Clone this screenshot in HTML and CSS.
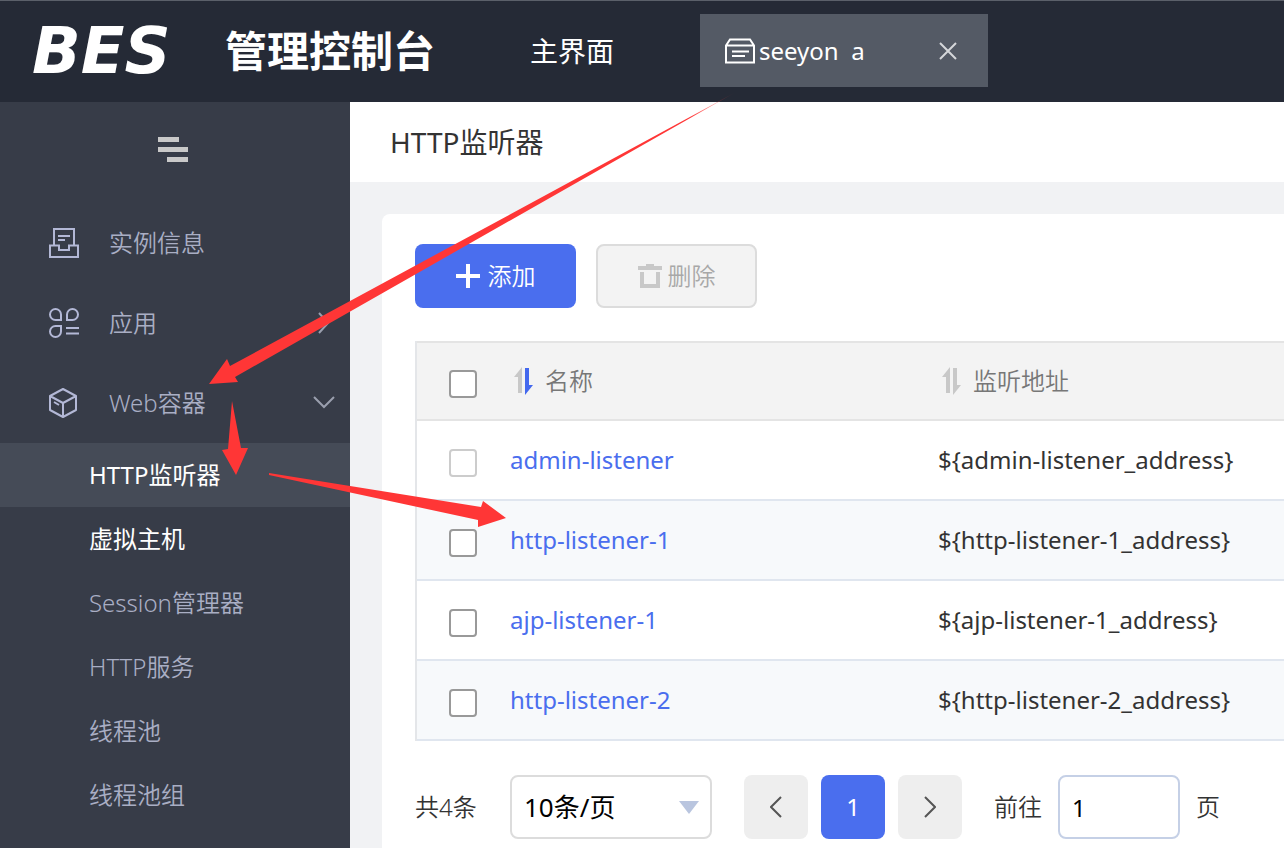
FILE: index.html
```html
<!DOCTYPE html>
<html lang="zh-CN">
<head>
  <meta charset="UTF-8">
  <meta name="viewport" content="width=device-width, initial-scale=1.0">
  <title>BES 管理控制台</title>
  <link rel="stylesheet" href="styles.css">
</head>
<body>
  <header class="topbar">
    <div class="brand">
      <span class="brand-logo">BES</span>
      <span class="brand-name">管理控制台</span>
    </div>
    <a class="home-link" href="#">主界面</a>
    <div class="tab">
      <svg class="tab-icon" width="30" height="26" viewBox="0 0 30 26" fill="none" stroke="#fff" stroke-width="2">
        <path d="M1 7.500 L5 1.500 H25 L29 7.500 V24.500 H1 Z M1 7.500 H29"/>
        <path d="M7 13.500 H24 M7 18 H20"/>
      </svg>
      <span class="tab-title">seeyon&nbsp; a</span>
      <button class="tab-close" type="button" aria-label="关闭">
        <svg width="18" height="18" viewBox="0 0 18 18" fill="none" stroke="#d5d7da" stroke-width="2">
          <path d="M1 1 L17 17 M17 1 L1 17"/>
        </svg>
      </button>
    </div>
  </header>

  <div class="layout">
    <nav class="sidebar">
      <button class="collapse" type="button" aria-label="收起菜单">
        <svg width="30" height="25" viewBox="0 0 30 25" fill="#c9c9c9">
          <path d="M0 0h21v5H0z M0 10h30v5H0z M9 20h21v5H9z"/>
        </svg>
      </button>
      <ul class="menu">
        <li>
          <a class="menu-item" href="#">
            <svg width="30" height="30" viewBox="0 0 30 30" fill="none" stroke="#b3b8d6" stroke-width="2">
              <path d="M5 17 V1 H25 V17"/>
              <path d="M1 17.500 H10 V22 H20 V17.500 H29 V29 H1 Z"/>
              <path d="M9 8 H21 M9 12 H16"/>
            </svg>
            <span>实例信息</span>
          </a>
        </li>
        <li>
          <a class="menu-item" href="#">
            <svg width="30" height="30" viewBox="0 0 30 30" fill="none" stroke="#b3b8d6" stroke-width="2">
              <path d="M12 12 H6.500 A5.500 5.500 0 1 1 12 6.500 Z"/>
              <path d="M18 12 V6.500 A5.500 5.500 0 1 1 23.500 12 Z"/>
              <path d="M12 18 V23.500 A5.500 5.500 0 1 1 6.500 18 Z"/>
              <path d="M17 20 H30 M17 25.500 H30"/>
            </svg>
            <span>应用</span>
            <svg class="arrow" width="22" height="22" viewBox="0 0 22 22" fill="none" stroke="#9a9fae" stroke-width="2">
              <path d="M6 1 L15 11 L6 21"/>
            </svg>
          </a>
        </li>
        <li>
          <a class="menu-item" href="#">
            <svg width="30" height="30" viewBox="0 0 30 30" fill="none" stroke="#b3b8d6" stroke-width="2" stroke-linejoin="round">
              <path d="M14 1 L27 8 V22 L14 29 L1 22 V8 Z M1 8 L14 15 L27 8 M14 15 V29"/>
              <path d="M5 14 L10 17"/>
            </svg>
            <span>Web容器</span>
            <svg class="arrow" width="22" height="22" viewBox="0 0 22 22" fill="none" stroke="#9a9fae" stroke-width="2">
              <path d="M1 5 L11 15 L21 5"/>
            </svg>
          </a>
          <ul class="submenu">
            <li><a class="active" href="#">HTTP监听器</a></li>
            <li><a class="bright" href="#">虚拟主机</a></li>
            <li><a href="#">Session管理器</a></li>
            <li><a href="#">HTTP服务</a></li>
            <li><a href="#">线程池</a></li>
            <li><a href="#">线程池组</a></li>
          </ul>
        </li>
      </ul>
    </nav>

    <main class="content">
      <h1 class="page-title">HTTP监听器</h1>
      <section class="card">
        <div class="toolbar">
          <button class="btn btn-primary" type="button">
            <svg width="24" height="24" viewBox="0 0 24 24" stroke="#fff" stroke-width="4">
              <path d="M12 0 V24 M0 12 H24"/>
            </svg>
            添加
          </button>
          <button class="btn btn-disabled" type="button" disabled>
            <svg width="24" height="26" viewBox="0 0 24 26" fill="#c8c8c8">
              <path d="M8 1h8v2h8v4H0V3h8z"/>
              <path d="M2 9h4v12h12V9h4v16H2z"/>
            </svg>
            删除
          </button>
        </div>

        <table class="list">
          <thead>
            <tr>
              <th class="check"><input type="checkbox" aria-label="全选"></th>
              <th class="name">
                <span class="sort">
                  <svg width="20" height="28" viewBox="0 0 20 28">
                    <path fill="#c8c8c8" d="M8 0 V26 H4 V10 H0 Z"/>
                    <path fill="#4368ee" d="M11 1 H15 V18 H19 L11 28 Z"/>
                  </svg>
                  名称
                </span>
              </th>
              <th class="address">
                <span class="sort">
                  <svg width="20" height="28" viewBox="0 0 20 28" fill="#c8c8c8">
                    <path d="M8 0 V26 H4 V10 H0 Z"/>
                    <path d="M11 1 H15 V18 H19 L11 28 Z"/>
                  </svg>
                  监听地址
                </span>
              </th>
            </tr>
          </thead>
          <tbody>
            <tr>
              <td class="check"><input type="checkbox" aria-label="admin-listener" disabled></td>
              <td><a href="#">admin-listener</a></td>
              <td>${admin-listener_address}</td>
            </tr>
            <tr>
              <td class="check"><input type="checkbox" aria-label="http-listener-1"></td>
              <td><a href="#">http-listener-1</a></td>
              <td>${http-listener-1_address}</td>
            </tr>
            <tr>
              <td class="check"><input type="checkbox" aria-label="ajp-listener-1"></td>
              <td><a href="#">ajp-listener-1</a></td>
              <td>${ajp-listener-1_address}</td>
            </tr>
            <tr>
              <td class="check"><input type="checkbox" aria-label="http-listener-2"></td>
              <td><a href="#">http-listener-2</a></td>
              <td>${http-listener-2_address}</td>
            </tr>
          </tbody>
        </table>

        <div class="pagination">
          <span class="total">共4条</span>
          <div class="page-size">
            <select aria-label="每页条数">
              <option>10条/页</option>
              <option>20条/页</option>
              <option>50条/页</option>
            </select>
          </div>
          <div class="pager">
            <button type="button" aria-label="上一页">
              <svg width="12" height="22" viewBox="0 0 12 22" fill="none" stroke="#555" stroke-width="2">
                <path d="M11 1 L1 11 L11 21"/>
              </svg>
            </button>
            <button class="current" type="button">1</button>
            <button type="button" aria-label="下一页">
              <svg width="12" height="22" viewBox="0 0 12 22" fill="none" stroke="#555" stroke-width="2">
                <path d="M1 1 L11 11 L1 21"/>
              </svg>
            </button>
          </div>
          <label class="jump">前往 <input type="text" value="1"> 页</label>
        </div>
      </section>
    </main>
  </div>

  <!-- Guide arrows: tab -> Web容器 -> HTTP监听器 -> http-listener-1 -->
  <svg class="guide" width="740" height="540" viewBox="0 0 740 540" fill="#ff3636">
    <defs>
      <linearGradient id="fade" gradientUnits="userSpaceOnUse" x1="738" y1="92" x2="690" y2="118">
        <stop offset="0" stop-color="#ff3636" stop-opacity="0"/>
        <stop offset="1" stop-color="#ff3636"/>
      </linearGradient>
    </defs>
    <path fill="url(#fade)" d="M736 92 L235 377 L238 382 L209 384 L227 359 L230 366 Z"/>
    <path d="M232 401 L241 448 L248 448 L236 475 L222 450 L228 449 Z"/>
    <path d="M269 473 L481 507 L483 501 L506 518 L478 527 L478 520 L269 475 Z"/>
  </svg>
</body>
</html>
```
FILE: styles.css
```css
* {
  box-sizing: border-box;
}
body {
  margin: 0;
  min-height: 100vh;
  display: flex;
  flex-direction: column;
  overflow-x: hidden;
  font-family: "Noto Sans", "Noto Sans CJK SC", sans-serif;
  font-size: 24px;
  line-height: 32px;
  color: #333;
  background-color: #f1f2f4;
}
a {
  text-decoration: none;
}
ul {
  list-style: none;
  margin: 0;
  padding: 0;
}
button, input, select {
  font: inherit;
}
button {
  padding: 0;
  border: none;
  background: none;
  cursor: pointer;
}

/* Top bar */
.topbar {
  display: flex;
  align-items: center;
  height: 102px;
  padding-bottom: 2px;
  flex-shrink: 0;
  border-top: 1px solid #5b606a;
  background-color: #252a36;
  color: #fff;
}
.brand {
  display: flex;
  align-items: center;
  width: 530px;
  padding-left: 32px;
}
.brand-logo {
  width: 193px;
  font-family: "DejaVu Sans", sans-serif;
  font-size: 64px;
  font-weight: bold;
  font-style: italic;
}
.brand-name {
  font-size: 42px;
  font-weight: bold;
}
.home-link {
  width: 170px;
  color: #fff;
  font-size: 28px;
}
.tab {
  display: flex;
  align-items: center;
  width: 288px;
  height: 73px;
  padding: 0 31px 0 25px;
  background-color: #545a65;
}
.tab-title {
  flex: 1;
  padding-left: 4px;
}
.tab-close {
  width: 18px;
  height: 18px;
  line-height: 0;
}

/* Sidebar */
.layout {
  display: flex;
  flex: 1;
}
.sidebar {
  width: 350px;
  flex-shrink: 0;
  background-color: #373c48;
}
.collapse {
  display: flex;
  align-items: center;
  justify-content: center;
  width: 100%;
  height: 101px;
  padding: 0 4px 6px 0;
}
.menu-item {
  display: flex;
  align-items: center;
  gap: 30px;
  height: 80px;
  padding: 0 15px 0 49px;
  color: #a9aec4;
  font-weight: 350;
}
.arrow {
  margin-left: auto;
}
.submenu a {
  display: block;
  padding: 16px 0 16px 89px;
  color: #a9aec4;
  font-weight: 350;
}
.submenu .active, .submenu .bright {
  color: #fff;
  font-weight: 400;
}
.submenu .active {
  background-color: #454b57;
}

/* Content */
.content {
  display: flex;
  flex-direction: column;
  flex: 1;
  min-width: 0;
}
.page-title {
  margin: 0;
  padding: 24px 40px;
  background-color: #fff;
  font-size: 28px;
  font-weight: 400;
  line-height: 32px;
}
.card {
  flex: 1;
  margin: 32px 0 0 32px;
  padding: 30px 0 8px 33px;
  border-top-left-radius: 8px;
  background-color: #fff;
}
.toolbar {
  display: flex;
  gap: 20px;
  margin-bottom: 33px;
}
.btn {
  display: flex;
  align-items: center;
  justify-content: center;
  width: 161px;
  height: 64px;
  border-radius: 8px;
  font-weight: 350;
}
.btn-primary {
  gap: 8px;
  background-color: #4a6eee;
  color: #fff;
}
.btn-disabled {
  gap: 6px;
  border: 2px solid #dcdcdc;
  background-color: #f3f3f3;
  color: #a8a8a8;
}

/* Listener table */
.list {
  width: 100%;
  table-layout: fixed;
  border-spacing: 0;
  border-left: 2px solid #e4e6e9;
}
.list th, .list td {
  height: 80px;
  padding: 0 10px;
  border-bottom: 2px solid #e0e6ef;
  text-align: left;
  white-space: nowrap;
}
.list th {
  border-top: 2px solid #e4e4e4;
  border-bottom-color: #e4e4e4;
  background-color: #f3f3f3;
  color: #777;
  font-weight: 350;
}
.list .check {
  width: 83px;
  padding: 6px 0 0 32px;
}
.list .name {
  width: 428px;
}
.list tbody tr:nth-child(even) {
  background-color: #f7f9fb;
}
.list a {
  color: #4a6eee;
}
.sort {
  display: flex;
  align-items: center;
  gap: 11px;
  padding-left: 4px;
}
input[type="checkbox"] {
  appearance: none;
  display: block;
  width: 28px;
  height: 28px;
  margin: 0;
  border: 2px solid #999;
  border-radius: 4px;
  background-color: #fff;
}
input[type="checkbox"]:disabled {
  border-color: #ccc;
}

/* Pagination */
.pagination {
  display: flex;
  align-items: center;
  margin-top: 34px;
  white-space: nowrap;
}
.total {
  width: 95px;
  font-weight: 350;
}
.page-size {
  position: relative;
}
.page-size select {
  appearance: none;
  width: 202px;
  height: 64px;
  padding: 0 12px;
  border: 2px solid #dcdcdc;
  border-radius: 8px;
  background-color: #fff;
  color: #000;
  font-size: 26px;
}
.page-size::after {
  content: "";
  position: absolute;
  top: 26px;
  right: 13px;
  border: 10px solid transparent;
  border-top: 13px solid #b9c5df;
  border-bottom: none;
  pointer-events: none;
}
.pager {
  display: flex;
  gap: 13px;
  margin: 0 32px;
}
.pager button {
  display: flex;
  align-items: center;
  justify-content: center;
  width: 64px;
  height: 64px;
  border-radius: 8px;
  background-color: #eee;
}
.pager .current {
  background-color: #4a6eee;
  color: #fff;
}
.jump {
  display: flex;
  align-items: center;
  gap: 16px;
  font-weight: 350;
}
.jump input {
  width: 122px;
  height: 64px;
  padding: 0 12px;
  border: 2px solid #c5d0e6;
  border-radius: 8px;
  color: #000;
  font-weight: 400;
}

.guide {
  position: absolute;
  top: 0;
  left: 0;
  pointer-events: none;
}
```
